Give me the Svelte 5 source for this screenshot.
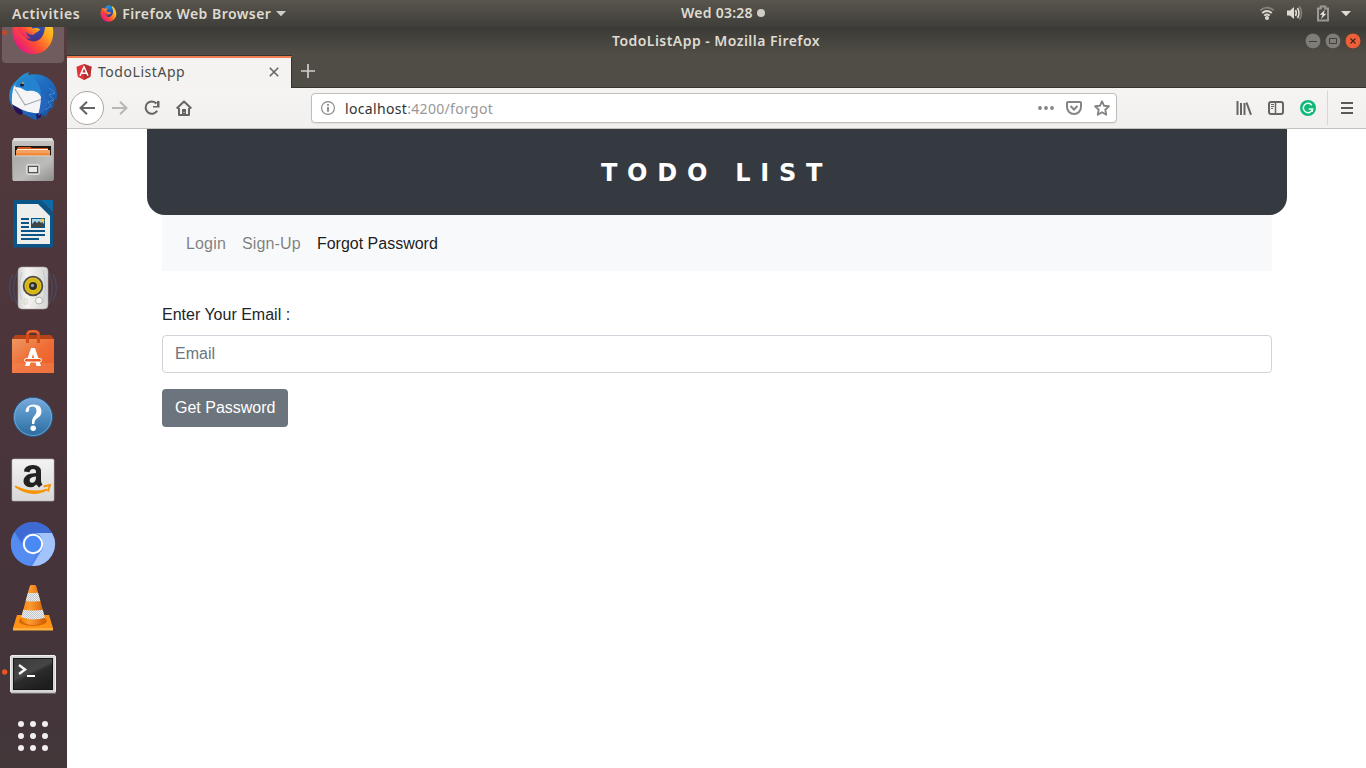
<script>
  let email = $state('');
  const links = [
    { label: 'Login', active: false },
    { label: 'Sign-Up', active: false },
    { label: 'Forgot Password', active: true }
  ];
  const dots = [20, 32, 44];
</script>

{#snippet firefox(id)}
  <defs>
    <linearGradient id="{id}a" x1=".95" y1="0.1" x2=".15" y2=".9">
      <stop offset="0" stop-color="#ffe23a" /><stop offset=".35" stop-color="#ffa61e" />
      <stop offset=".68" stop-color="#ff4a35" /><stop offset="1" stop-color="#e31587" />
    </linearGradient>
    <linearGradient id="{id}b" x1="0" y1="0" x2="0" y2="1">
      <stop offset="0" stop-color="#1a9bf0" /><stop offset=".5" stop-color="#2a55b0" /><stop offset="1" stop-color="#4a2f86" />
    </linearGradient>
  </defs>
  <path fill="url(#{id}a)" d="M7 8c-5 6-6 13-5 20 2 11 11 19 22 19 13 0 23-10 22-24-1-9-5-15-13-21l1 7H11z" />
  <path fill="url(#{id}b)" d="M14 7c6-7 15-7 20 0 3 5 4 12 2 18-2 6-7 10-13 9-5-1-8-4-9-9-1-6-2-12 0-18z" />
  <path fill="url(#{id}a)" d="M6 9c2 3 4 3 7 3 3-2 6-2 9-2-2 2-4 4-5 7 3 0 5 3 7 4 2-1 6-1 8 1-2 2-5 3-7 5-4 1-7-1-9-3 1 3 3 6 6 7-6 1-12-4-14-10z" />
{/snippet}

<div class="desktop">
  <header class="panel">
    <span class="activities">Activities</span>
    <svg class="ff" viewBox="0 0 48 48" width="17" height="17">{@render firefox('s')}</svg>
    <span class="appname">Firefox Web Browser</span>
    <svg class="caret" width="10" height="6"><path d="M0 0h10L5 5.2z" fill="#cfcec8" /></svg>
    <div class="clock"><span>Wed 03:28</span><i></i></div>
    <div class="tray">
      <svg width="16" height="16" viewBox="0 0 16 16" fill="none" stroke-width="1.8">
        <path d="M1.3 4.2Q8 -.8 14.7 4.2" stroke="#84827b" />
        <path d="M3.2 7Q8 3 12.8 7M5.2 9.6Q8 7.4 10.8 9.6" stroke="#dfdbd2" />
        <circle cx="8" cy="12" r="2" fill="#dfdbd2" />
      </svg>
      <svg width="17" height="16" viewBox="0 0 17 16" fill="none" stroke-width="1.6">
        <path d="M1 4.500h3L8 1v12l-4-3.500H1z" fill="#dfdbd2" />
        <path d="M9.500 4q1.700 3 0 6M11.500 2q3 5 0 10" stroke="#dfdbd2" />
        <path d="M13.500 .500q4 6.500 0 13" stroke="#84827b" />
      </svg>
      <svg width="14" height="17" viewBox="0 0 14 17">
        <path d="M2 3.500h2.700V1.500h4.600v2H12v12H2z" fill="none" stroke="#9a9890" stroke-width="2" />
        <path d="M9 4.800 3.800 9.800h2.700L5 14l5.300-5.300H7.700z" fill="#e8e6e0" />
      </svg>
      <svg width="10" height="6"><path d="M0 0h10L5 5.2z" fill="#dfdbd2" /></svg>
    </div>
  </header>

  <div class="body">
    <aside class="dock">
      <div class="apps">
        <svg width="67" height="64">
          <rect x="2" y="2" width="62" height="61" rx="4" fill="#705b5e" />
          <circle cx="4.500" cy="32.500" r="2.500" fill="#c4492b" />
          <svg x="11" y="8" width="44" height="47" viewBox="0 0 48 48" preserveAspectRatio="none">{@render firefox('d')}</svg>
        </svg>

        <svg width="67" height="64">
          <defs><linearGradient id="tb" x1="0" y1="0" x2="1" y2="1"><stop offset="0" stop-color="#2ba4dc" /><stop offset=".45" stop-color="#1f6fc4" /><stop offset="1" stop-color="#1c4c9c" /></linearGradient></defs>
          <path d="M14 45c-7-8-6-19 0-26 4-4 7-7 10-9l5-2-1 3c11-3 23 2 27 11 3 7 2 13 1 15l-2-2c1 5-1 9-3 11l-1-3c-1 5-3 8-6 10v-3c-2 3-5 5-9 6z" fill="url(#tb)" />
          <path d="M12 37c1 8 4 13 9 14l2-2-3-7z" fill="#271158" />
          <path d="M36 50l6-2-1 5-4 2z" fill="#271158" />
          <path d="M14 22 20 20 41 26 43 46 40 49C30 50 19 45 12 40c-.5-6 0-12 2-18z" fill="#f5f5f7" />
          <path d="M15 25 25 41 42 35" fill="none" stroke="#a9abb2" stroke-width="1.200" />
          <path d="M15 23c4-10 13-13 20-7 7 2 9 12 7 19-3-8-8-9-15-8-4-1-5-4-12-4z" fill="#2383cf" />
          <path d="M34 15c8 5 9 19 4 37 7-4 10-10 11-19l-3 3c0-10-5-17-12-21z" fill="#2466bd" />
          <path d="m49 24 6 5-6 2 5 5-6 2 3 4-6 4" fill="none" stroke="#4089cc" stroke-width="1" />
          <ellipse cx="22" cy="21" rx="2" ry="1.500" fill="#151c48" /><path d="m22 18 3 1-3 1" fill="#d6a95a" />
        </svg>

        <svg width="67" height="64">
          <defs>
            <linearGradient id="fc" x2="0" y2="1"><stop offset="0" stop-color="#c8c8c6" /><stop offset="1" stop-color="#8b8b89" /></linearGradient>
            <linearGradient id="fp" x2="1" y2="1"><stop offset="0" stop-color="#aaa" /><stop offset=".55" stop-color="#bcbcba" /><stop offset="1" stop-color="#8e8e8c" /></linearGradient>
          </defs>
          <path d="M14 10h38l2 3v39H12V13z" fill="url(#fc)" /><path d="M14 10h38l1 3H13z" fill="#dededc" />
          <rect x="15" y="18" width="36" height="13" fill="#1c1713" />
          <path d="M18 19h13v1h17v10H17v-9z" fill="#d3541e" /><path d="M16 22h34v3H16z" fill="#f5a060" /><path d="M16 25h34v6H16z" fill="#f28a3c" /><path d="M17 21.500h31" stroke="#fff0d7" />
          <path d="M14 28h38l1 2v23H13V30z" fill="url(#fp)" /><path d="M14 28h38" stroke="#d5d5d2" />
          <rect x="26.500" y="36.500" width="13" height="10" rx="1.500" fill="#b5b5b3" stroke="#dededa" /><rect x="28.500" y="38.500" width="9" height="6" fill="#e8e8e6" stroke="#555" />
        </svg>

        <svg width="67" height="64">
          <path d="M15 8h26l12 13v33q0 1.500-1.500 1.500h-37Q13 55.500 13 54V10q0-2 2-2z" fill="#0b5587" />
          <path d="M41 8h12v12z" fill="#0b6aa8" />
          <path d="M17 12h21l12 12v28H17z" fill="#eeeeed" />
          <path d="M21 27h8M21 31h8M21 35h8M21 39h24M21 43h24M21 47h18" stroke="#0b5587" stroke-width="2" />
          <rect x="31" y="26" width="14" height="10" fill="#0b5587" /><path d="M32 27h12v8H32z" fill="#a9d4eb" /><circle cx="42.500" cy="28.500" r="2" fill="#edc744" />
          <path d="m32 32 3-3 2 2 2-2 2 2 1-1 2 2v3H32z" fill="#404646" />
        </svg>

        <svg width="67" height="64">
          <defs><linearGradient id="rb" x1="0" x2="1"><stop offset="0" stop-color="#d6d4d0" /><stop offset=".3" stop-color="#f5f4f1" /><stop offset="1" stop-color="#d5d4d0" /></linearGradient></defs>
          <g fill="none" stroke="#4a587b" stroke-width="1.500" opacity=".5"><path d="M17 17q-7 15 0 31M13 18q-7 13 0 27M49 17q7 15 0 31M53 18q7 13 0 27" /></g>
          <path d="M22 11h22q4 0 4 4v34q0 4-4 4H22q-4 0-4-4V15q0-4 4-4z" fill="url(#rb)" stroke="#aaa8a6" stroke-width=".6" />
          <circle cx="33" cy="30" r="10.300" fill="#4e4d4b" /><circle cx="33" cy="30" r="8.500" fill="#e0c018" /><circle cx="33" cy="30" r="6.300" fill="none" stroke="#b79c15" stroke-width=".7" />
          <circle cx="33" cy="30" r="4" fill="#302d2c" /><circle cx="32.500" cy="29.500" r="1.700" fill="#9c9ca8" />
          <circle cx="39" cy="44.500" r="3.500" fill="#f6f5f3" stroke="#b3b1ae" /><path d="M24 43h3v5h-3z" fill="none" stroke="#d6d4d0" />
          <path d="M22 16q-5 14 0 28M43 14q5 17 0 33" fill="none" stroke="#b5c4da" stroke-width=".8" />
        </svg>

        <svg width="67" height="64">
          <defs><linearGradient id="sw" x1="0" y1="0" x2="1" y2="1"><stop offset="0" stop-color="#ed9862" /><stop offset=".5" stop-color="#ef6d35" /><stop offset="1" stop-color="#eb5e27" /></linearGradient></defs>
          <path d="m15 15-3 4h42l-3-4z" fill="#b44317" />
          <path d="M12 19h42v34H12z" fill="url(#sw)" /><path d="M12 43h42v10H12z" fill="#f58d5c" opacity=".4" />
          <path d="M27.500 23v-8q0-3.500 3.500-3.500h4q3.500 0 3.500 3.500v8" fill="none" stroke="#d64b17" stroke-width="3" /><path d="M27.500 14q1-3 4-3h3q3 0 4 3" fill="none" stroke="#f38453" />
          <path d="M25 46l6-18h4l6 18H36.500l-3.500-12-3.500 12z" fill="#fff" /><rect x="24.500" y="38.500" width="17" height="3.500" rx="1.700" fill="#e95d25" stroke="#fff" />
        </svg>

        <svg width="67" height="64">
          <defs><linearGradient id="hp" x2="0" y2="1"><stop offset="0" stop-color="#79a9dd" /><stop offset=".5" stop-color="#4f8dc0" /><stop offset="1" stop-color="#2a6a9d" /></linearGradient></defs>
          <circle cx="33" cy="33" r="19.500" fill="url(#hp)" stroke="#245d94" /><circle cx="33" cy="33" r="18.500" fill="none" stroke="#82b4db" stroke-width=".7" />
          <path d="M25.500 26.500Q27 20.500 33.500 20.500q8 0 8 6.800c0 4-2 5.500-4.200 7-2 1.400-2.800 2.900-2.900 5.700h-2.400c-.2-4 .5-5.700 2-7.700 1.400-1.900 2.500-3.100 2.500-5.300 0-3-1.500-4.500-4-4.500-2.500 0-3.700 1-3.400 2.700.4 3-3.600 4.300-3.600 1.300z" fill="#fff" /><circle cx="33.200" cy="44.300" r="2.700" fill="#fff" />
        </svg>

        <svg width="67" height="64">
          <defs><linearGradient id="am" x2="0" y2="1"><stop offset="0" stop-color="#f3f3f3" /><stop offset="1" stop-color="#d8d8d8" /></linearGradient></defs>
          <rect x="12" y="11" width="42" height="42" rx="1.500" fill="url(#am)" stroke="#bcbaba" stroke-width=".6" />
          <path d="M24 23.500q.5-6.500 8.800-6.500 8.200 0 8.200 6.500v9q0 2.500 1.500 4L39 39.500l-2.700-3Q34 39.200 30.500 39.200c-9 0-9.500-11.500 0-13.400l5.500-.8v-1.500q0-2.500-3-2.500-2.800 0-3.500 3.200z" fill="#222220" /><path d="m36 28.500-2 .200c-6 .700-5 6.300-1.800 6 3-.2 3.800-2.700 3.800-6.200z" fill="#eaeaea" />
          <path d="M15.500 38.500q16 11.500 31.500 3-15 5-31.500-3z" fill="#f79400" stroke="#f79400" stroke-width="1.600" stroke-linejoin="round" /><path d="M43.500 38.500 50 37l-2 6.500" fill="none" stroke="#f79400" stroke-width="1.900" />
        </svg>

        <svg width="67" height="64">
          <circle cx="33" cy="32" r="22" fill="#4f82ed" />
          <path d="M14.500 20A22 22 0 0 1 52 21H33q-10 0-11 10z" fill="#3d6bd3" />
          <path d="M52 21H34q10 1 9 15l-11 18A22 22 0 0 0 52 21z" fill="#a2c4fb" />
          <path d="m14.500 20 9 17q5 6 13 4l-6 13A22 22 0 0 1 14.500 20z" fill="#558cf2" />
          <circle cx="33" cy="32" r="9.200" fill="#4889f4" stroke="#fff" stroke-width="2" />
        </svg>

        <svg width="67" height="64">
          <defs>
            <linearGradient id="vl" x1="0" x2="1"><stop offset="0" stop-color="#ef7e00" /><stop offset=".35" stop-color="#ff9d30" /><stop offset="1" stop-color="#cc5700" /></linearGradient>
            <pattern id="ck" width="2" height="2" patternUnits="userSpaceOnUse"><path fill="#eceeef" d="M0 0h2v2H0z" /><path fill="#bfc6ca" d="M0 0h1v1H0zM1 1h1v1H1z" /></pattern>
            <clipPath id="cone"><path d="M31 9h4q1 0 1.500 2L45 42q-1 7-12 7t-12-7l8.500-31q.5-2 1.500-2z" /></clipPath>
          </defs>
          <path d="M17 39h32l4 13v2H13v-2z" fill="#ff9214" /><path d="M13 52h40v2.500H13z" fill="#ffb03e" /><ellipse cx="33" cy="45" rx="14" ry="5" fill="#b84a00" opacity=".6" />
          <g clip-path="url(#cone)"><path d="M20 8h27v43H20z" fill="url(#vl)" /><path d="M20 16q13 2 27 0v8q-13 3-27 0zM20 33q13 3 27 0v8q-13 5-27 0z" fill="url(#ck)" /></g>
        </svg>

        <svg width="67" height="64">
          <defs><linearGradient id="tm" x1="0" y1="0" x2=".6" y2="1"><stop offset="0" stop-color="#3a3a3a" /><stop offset=".5" stop-color="#464646" /><stop offset=".6" stop-color="#2c2c2c" /><stop offset="1" stop-color="#1e1e1e" /></linearGradient></defs>
          <circle cx="4.700" cy="32" r="2.700" fill="#e95420" />
          <rect x="10.500" y="15.500" width="45" height="37" rx="1.500" fill="#d5d5d3" stroke="#f0f0ed" /><path d="M11 53h45" stroke="#999" /><rect x="13.500" y="18.500" width="39" height="31" fill="url(#tm)" stroke="#161616" />
          <path d="m19 25 6 4.500-6 4.500" fill="none" stroke="#f4f4f4" stroke-width="2.500" /><path d="M27 36h8" stroke="#fff" stroke-width="2" />
        </svg>

        <svg width="67" height="64">
          {#each dots as y}{#each dots as x}<circle cx={x + 1} cy={y} r="3" fill="#f0eeee" />{/each}{/each}
        </svg>
      </div>
    </aside>

    <main class="window">
      <div class="titlebar">
        <span class="title">TodoListApp - Mozilla Firefox</span>
        <div class="controls">
          <svg width="16" height="16"><circle cx="8" cy="8" r="7.800" fill="#7f7d75" stroke="#363531" stroke-width=".5" /><path d="M4 8.500h8" stroke="#3f3e39" /></svg>
          <svg width="16" height="16"><circle cx="8" cy="8" r="7.800" fill="#7f7d75" stroke="#363531" stroke-width=".5" /><path d="M4.500 5.500h7v5h-7z" fill="none" stroke="#3f3e39" /></svg>
          <svg width="16" height="16"><circle cx="8" cy="8" r="7.800" fill="#ed6038" stroke="#363531" stroke-width=".5" /><path d="m5.500 5.500 5 5m0-5-5 5" stroke="#45251b" stroke-width="1.200" /></svg>
        </div>
      </div>

      <div class="tabs">
        <div class="tab">
          <svg width="16" height="16" viewBox="0 0 16 16"><path d="m8 0 7.500 2.700-1.200 10L8 16l-6.300-3.300-1.200-10z" fill="#e23237" /><path d="m8 0 7.500 2.700-1.200 10L8 16z" fill="#b52e31" /><path d="m4 11.800 4-9 4 9M5.700 9.300h4.600" fill="none" stroke="#fff" stroke-width="1.500" /></svg>
          <span>TodoListApp</span>
          <svg class="close" width="10" height="10"><path d="m.800.800 8.400 8.400m0-8.400L.800 9.200" stroke="#656562" stroke-width="1.600" /></svg>
        </div>
        <svg class="plus" width="14" height="14"><path d="M7 0v14M0 7h14" stroke="#d0cec9" stroke-width="1.700" /></svg>
      </div>

      <div class="toolbar">
        <div class="back"><svg width="16" height="14" fill="none" stroke="#666563" stroke-width="2"><path d="M16 7H1.500M8 .800 1.500 7 8 13.200" /></svg></div>
        <svg class="fwd" width="16" height="14" fill="none" stroke="#b8b7b5" stroke-width="2"><path d="M0 7h14.500M8 .800 14.500 7 8 13.200" /></svg>
        <svg class="reload" width="16" height="16" fill="none" stroke="#666563" stroke-width="2"><path d="M13.200 10.700A6.200 6.200 0 1 1 12.500 3.500" /><path d="M15.500 1v6.500H9v-1.500h4V1z" fill="#666563" stroke="none" /></svg>
        <svg class="home" width="16" height="16" fill="none" stroke="#666563" stroke-width="2"><path d="M.700 8.500 8 1.500l7.300 7M3 8v7h10V8" stroke-linejoin="round" /><path d="M6 9h4v6H6z" fill="#666563" stroke="none" /><path d="M8 12v1" stroke="#ddd" stroke-width="1" /></svg>
        <div class="url">
          <svg width="14" height="14"><circle cx="7" cy="7" r="6.400" fill="none" stroke="#858482" stroke-width="1.100" /><path d="M7 6v4.800M7 3v1.700" stroke="#858482" stroke-width="1.800" /></svg>
          <span class="address"><b>localhost</b>:4200/forgot</span>
          <svg width="16" height="4" fill="#858482"><circle cx="2" cy="2" r="1.900" /><circle cx="8" cy="2" r="1.900" /><circle cx="14" cy="2" r="1.900" /></svg>
          <svg width="16" height="14" fill="none" stroke="#858482" stroke-width="2"><path d="M2 1h12q1 0 1 1v4a7 7 0 0 1-14 0V2q0-1 1-1z" /><path d="M4.500 5 8 8.500 11.500 5" /></svg>
          <svg width="16" height="16" fill="none" stroke="#858482" stroke-width="1.900" stroke-linejoin="round"><path d="m8 1.300 2 4.400 4.900.600-3.600 3.400.900 5L8 12.300l-4.200 2.400.900-5L1.100 6.300 6 5.700z" /></svg>
        </div>
        <div class="tools">
          <svg width="16" height="14" stroke="#666563" stroke-width="2"><path d="M1.500 0v14M5 2v12M8.500 2v12" /><path d="m10.500 1.500 4.500 12.300" /></svg>
          <svg width="16" height="14" fill="none" stroke="#666563" stroke-width="2"><rect x="1" y="1" width="14" height="12" rx="2" /><path d="M7.500 1v12" stroke-width="1.500" /><path d="M3 3.500h3M3 5.500h3M3 7.500h2" stroke-width="1" /></svg>
          <svg width="16" height="16"><circle cx="8" cy="8" r="8" fill="#10b878" /><path d="M11.800 5.200A4.700 4.700 0 1 0 12.600 9H8.700m3.700 0-.2 3" fill="none" stroke="#e8fbf3" stroke-width="1.500" /></svg>
          <i></i>
          <svg width="12" height="12"><path d="M0 1h12M0 6h12M0 11h12" stroke="#5a5957" stroke-width="2" /></svg>
        </div>
      </div>

      <section class="page">
        <div class="container">
          <h1>TODO LIST</h1>
          <div class="content">
            <nav>
              {#each links as l}<a href="#top" class:active={l.active}>{l.label}</a>{/each}
            </nav>
            <form>
              <label for="email">Enter Your Email :</label>
              <input id="email" type="email" placeholder="Email" bind:value={email} />
              <button type="button">Get Password</button>
            </form>
          </div>
        </div>
      </section>
    </main>
  </div>
</div>

<style>
  :global(body) { overflow: hidden; }
  svg { display: block; flex: none; }
  .desktop {
    width: 1366px; height: 768px; display: flex; flex-direction: column; overflow: hidden; background: #fff;
    font-family: 'Noto Sans', sans-serif; box-sizing: border-box;
  }
  .desktop :global(*) { box-sizing: border-box; }

  .panel {
    height: 27px; flex: none; display: grid; grid-template-columns: auto auto auto auto 1fr auto; align-items: center;
    padding: 0 15px 0 12px; background: linear-gradient(#58554c, #3f3e3a); color: #dfdbd2;
    font-size: 14px; font-weight: 600; line-height: 27px; white-space: nowrap; position: relative;
  }
  .activities { letter-spacing: .57px; }
  .ff { margin-left: 20px; margin-top: -1px; }
  .appname { margin-left: 5px; letter-spacing: .47px; }
  .caret { margin: 0 0 0 5px; }
  .clock { position: absolute; left: 681px; top: 0; height: 26px; line-height: 26px; display: flex; align-items: center; gap: 4px; letter-spacing: .25px; }
  .clock i { width: 8px; height: 8px; border-radius: 50%; background: #cfccc5; }
  .tray { grid-column: 6; display: flex; align-items: center; gap: 11px; }
  .tray svg:nth-child(3) { margin: -1px 0 0 2px; }

  .body { flex: 1; min-height: 0; display: flex; }
  .dock { width: 67px; flex: none; overflow: hidden; background: linear-gradient(#543b3e, #4b353b 45%, #45343a 75%, #43373a); }
  .apps { margin-top: -27px; display: flex; flex-direction: column; }

  .window { flex: 1; min-width: 0; display: flex; flex-direction: column; }
  .titlebar {
    height: 29px; flex: none; display: grid; grid-template-columns: 1fr auto 1fr; align-items: center;
    padding: 0 5px 2px 0; background: linear-gradient(#3b3a36, #504d46 27px);
  }
  .title { grid-column: 2; color: #dfdbd2; font-size: 14px; font-weight: 600; line-height: 20px; margin-left: 4px; letter-spacing: .46px; white-space: nowrap; }
  .controls { display: flex; gap: 4px; justify-self: end; }
  .tabs { height: 32px; flex: none; display: flex; background: #504d46; border-bottom: 1px solid #36342f; }
  .tab {
    width: 225px; height: 32px; display: flex; align-items: center; padding: 0 12px 2px 9px; background: #f4f3f2;
    border-top: 2px solid #ef7e50; border-right: 1px solid #36342f; box-shadow: 0 -1px #36342f; color: #4c4b49; font-size: 14px;
  }
  .tab span { margin-left: 6px; line-height: 20px; letter-spacing: .55px; }
  .close { margin-left: auto; }
  .plus { margin: 8px 0 0 9px; }

  .toolbar { height: 41px; flex: none; display: flex; align-items: center; background: linear-gradient(#f5f4f3, #f1f0ef); border-bottom: 1px solid #c3c1be; padding-left: 3px; }
  .back { width: 34px; height: 34px; border: 1px solid #aaa8a5; border-radius: 50%; background: #fff; display: grid; place-items: center; }
  .back svg { margin-left: -1px; }
  .fwd { margin-left: 8px; }
  .reload, .home { margin-left: 16px; }
  .url { width: 806px; height: 30px; margin-left: 119px; display: flex; align-items: center; background: #fff; border: 1px solid #bfbdba; border-radius: 4px; padding: 0 6px 0 9px; gap: 12px; box-shadow: 0 1px 1px #e4e2e0; }
  .address { margin-left: -2px; padding-top: 2px; flex: 1; color: #989898; font-size: 14px; line-height: 20px; letter-spacing: .33px; }
  .address b { font-weight: 400; color: #333; }
  .tools { margin-left: auto; display: flex; align-items: center; gap: 16px; padding-right: 13px; }
  .tools i { width: 1px; height: 34px; background: #d8d6d4; margin: 0 -4px 0 -5px; }
  .tools svg:last-child { margin-left: 1px; }

  .page { flex: 1; background: #fff; font: 16px/24px 'Liberation Sans', Arial, sans-serif; color: #212529; }
  .container { width: 1140px; margin-left: 80px; }
  h1 {
    margin: 0; height: 86px; border-radius: 0 0 18px 18px; background: #343a40; color: #fff; text-align: center;
    font: 700 24px/88px 'DejaVu Sans', Verdana, sans-serif; letter-spacing: 9.75px; padding-right: 1px;
  }
  .content { padding: 0 15px; }
  nav { height: 56px; background: #f8f9fa; display: flex; align-items: center; gap: 16px; padding: 2px 24px 0; }
  nav a { color: rgba(0, 0, 0, .5); text-decoration: none; letter-spacing: .16px; }
  nav a.active { color: rgba(0, 0, 0, .9); letter-spacing: 0; }
  form { padding-top: 32px; display: flex; flex-direction: column; align-items: flex-start; }
  label { margin-bottom: 8px; }
  input { width: 100%; height: 38px; border: 1px solid #ced4da; border-radius: 4px; padding: 6px 12px; font: inherit; outline: 0; }
  input::placeholder { color: #6c757d; opacity: 1; }
  button { margin-top: 16px; height: 38px; border: 0; border-radius: 4px; padding: 0 13px; background: #6c757d; color: #fff; font: inherit; }
</style>
